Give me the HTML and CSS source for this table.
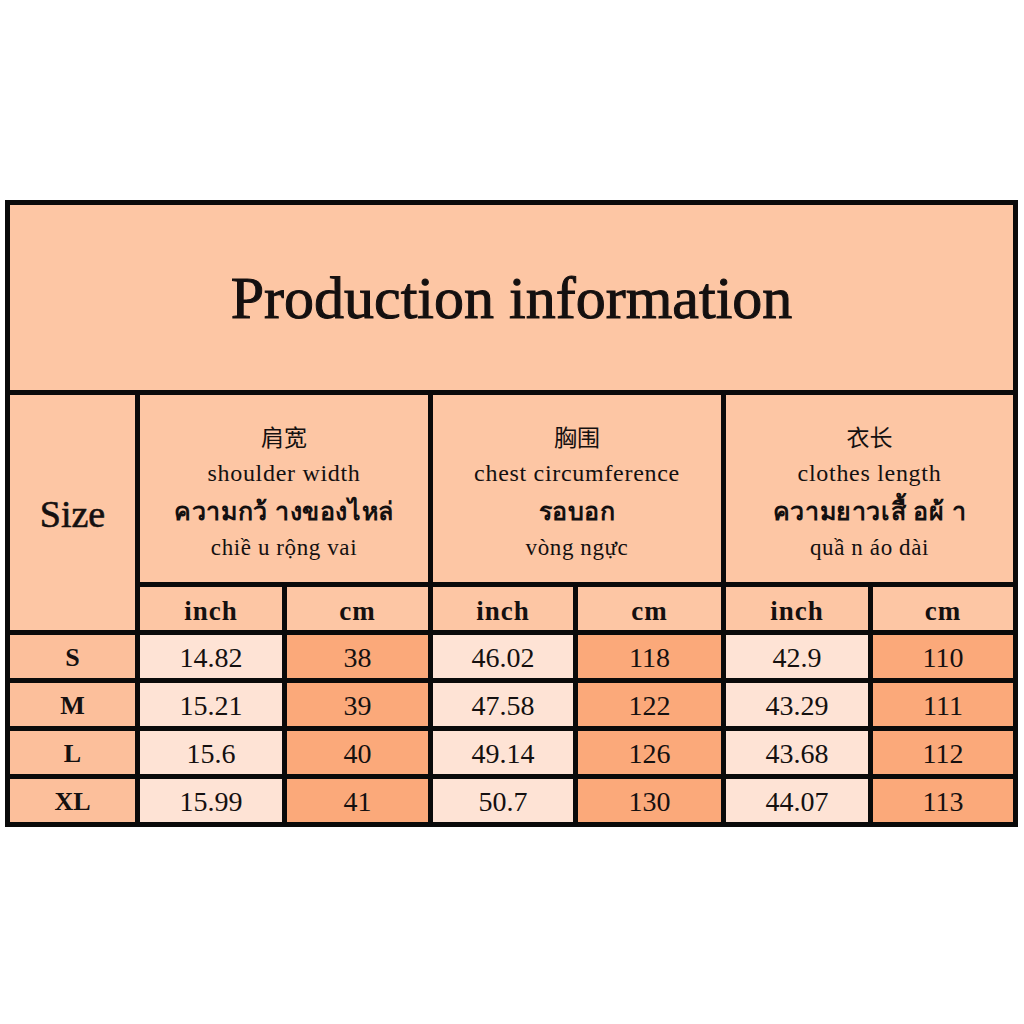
FILE: index.html
```html
<!DOCTYPE html>
<html lang="en">
<head>
<meta charset="utf-8">
<title>Production information</title>
<link rel="stylesheet" href="styles.css">
</head>
<body>
<div class="table">
  <div class="cell title">Production information</div>

  <div class="cell size-head">Size</div>
  <div class="cell measure m1">
    <span class="zh">肩宽</span>
    <span class="en">shoulder width</span>
    <span class="th">ความกว้ างของไหล่</span>
    <span class="vi">chiề u rộng vai</span>
  </div>
  <div class="cell measure m2">
    <span class="zh">胸围</span>
    <span class="en">chest circumference</span>
    <span class="th">รอบอก</span>
    <span class="vi">vòng ngực</span>
  </div>
  <div class="cell measure m3">
    <span class="zh">衣长</span>
    <span class="en">clothes length</span>
    <span class="th">ความยาวเสื้ อผ้ า</span>
    <span class="vi">quầ n áo dài</span>
  </div>

  <div class="cell unit">inch</div><div class="cell unit">cm</div>
  <div class="cell unit">inch</div><div class="cell unit">cm</div>
  <div class="cell unit">inch</div><div class="cell unit">cm</div>

  <div class="cell size">S</div>
  <div class="cell in">14.82</div><div class="cell cm">38</div>
  <div class="cell in">46.02</div><div class="cell cm">118</div>
  <div class="cell in">42.9</div><div class="cell cm">110</div>

  <div class="cell size">M</div>
  <div class="cell in">15.21</div><div class="cell cm">39</div>
  <div class="cell in">47.58</div><div class="cell cm">122</div>
  <div class="cell in">43.29</div><div class="cell cm">111</div>

  <div class="cell size">L</div>
  <div class="cell in">15.6</div><div class="cell cm">40</div>
  <div class="cell in">49.14</div><div class="cell cm">126</div>
  <div class="cell in">43.68</div><div class="cell cm">112</div>

  <div class="cell size">XL</div>
  <div class="cell in">15.99</div><div class="cell cm">41</div>
  <div class="cell in">50.7</div><div class="cell cm">130</div>
  <div class="cell in">44.07</div><div class="cell cm">113</div>
</div>
</body>
</html>
```
FILE: styles.css
```css
html, body {
  margin: 0;
  padding: 0;
  background: #ffffff;
}

body {
  padding: 200px 0 0 5px;
  font-family: "Liberation Serif", "Noto Sans CJK SC", serif;
  color: #141010;
}

.table {
  width: 1013px;
  box-sizing: border-box;
  display: grid;
  grid-template-columns: 125px 142px 141px 140px 143px 142px 140px;
  grid-template-rows: 185px 187px 43px 43px 43px 43px 43px;
  gap: 5px;
  padding: 5px;
  background: #0a0a0a;
}

.cell {
  display: flex;
  align-items: center;
  justify-content: center;
  background: #fdc6a4;
  line-height: 1;
}

.title {
  grid-column: 1 / -1;
  font-size: 60px;
  -webkit-text-stroke: 1px #141010;
}

.size-head {
  grid-row: 2 / 4;
  font-size: 38px;
  padding-top: 2px;
  -webkit-text-stroke: 0.6px #141010;
}

.measure {
  grid-column: span 2;
  flex-direction: column;
  padding-top: 6px;
  box-sizing: border-box;
}

.measure span {
  display: block;
  height: 37px;
  line-height: 37px;
  white-space: nowrap;
}

.zh {
  font-family: "Noto Sans CJK SC", sans-serif;
  font-size: 23px;
}

.en {
  font-size: 24px;
  letter-spacing: 0.7px;
}

.th {
  font-family: "Noto Sans", "DejaVu Sans", sans-serif;
  font-weight: 700;
  font-size: 25px;
  letter-spacing: 0.6px;
}

.vi {
  font-size: 23px;
  letter-spacing: 0.6px;
}

.unit {
  font-size: 27px;
  font-weight: 700;
  letter-spacing: 1px;
  padding-top: 6px;
  box-sizing: border-box;
}

.size {
  background: #fcbf9b;
  font-size: 26px;
  font-weight: 700;
  padding-top: 2px;
  box-sizing: border-box;
}

.in {
  background: #fee3d5;
  font-size: 28px;
  padding-top: 2px;
  box-sizing: border-box;
}

.cm {
  background: #fba97a;
  font-size: 28px;
  padding-top: 2px;
  box-sizing: border-box;
}
```
